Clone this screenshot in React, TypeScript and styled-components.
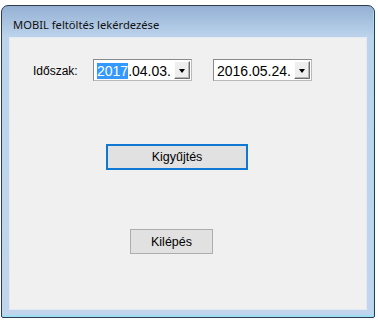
import styled, { createGlobalStyle } from "styled-components";

const GlobalStyle = createGlobalStyle`
  html, body {
    margin: 0;
    padding: 0;
    background: #ffffff;
  }
  * {
    box-sizing: border-box;
  }
`;

const Window = styled.div`
  margin: 5px 0 0 1px;
  width: 374px;
  height: 313px;
  border: 1px solid #2d3c50;
  border-radius: 7px 7px 2px 2px;
  padding: 0 7px 7px 7px;
  display: flex;
  flex-direction: column;
  background: linear-gradient(to bottom, #94b1d4 0px, #bcd3eb 31px, #c1d6ec 100%);
  box-shadow: inset -1px -2px 0 #9fdff3;
`;

const TitleBar = styled.div`
  height: 31px;
  display: flex;
  align-items: center;
  padding: 5px 0 0 4px;
`;

const Title = styled.span`
  font-family: "Noto Sans", "Liberation Sans", sans-serif;
  font-size: 11.2px;
  color: #111;
  white-space: nowrap;
`;

const Client = styled.div`
  flex: 1;
  background: #f0f0f0;
  border: 1px solid #e2eaf4;
  display: flex;
  flex-direction: column;
  align-items: flex-start;
  padding: 21px 0 0 0;
`;

const Row = styled.div`
  display: flex;
  align-items: center;
  padding-left: 23px;
`;

const Label = styled.span`
  width: 60px;
  padding-top: 2px;
  font-family: "Liberation Sans", Arial, sans-serif;
  font-size: 12px;
  color: #000;
`;

const Picker = styled.div<{ $gap?: number }>`
  width: 99px;
  height: 22px;
  margin-left: ${(p) => p.$gap ?? 0}px;
  background: #fff;
  border: 1px solid #8a8a8a;
  border-right-color: #b9b9b9;
  border-bottom-color: #b9b9b9;
  display: flex;
  align-items: center;
  padding: 0 1px 0 3px;
  font-family: "Liberation Sans", Arial, sans-serif;
  font-size: 14px;
  color: #000;
`;

const PickerText = styled.span`
  flex: 1;
  white-space: nowrap;
  line-height: 16px;
  padding-top: 1px;
`;

const Selected = styled.span`
  background: #3399ff;
  color: #fff;
`;

const DropButton = styled.div`
  width: 16px;
  height: 18px;
  background: #eeeeee;
  border: 1px solid #fdfdfd;
  border-right-color: #6f6f6f;
  border-bottom-color: #6f6f6f;
  box-shadow: inset -1px -1px 0 #b5b5b5;
  display: flex;
  align-items: center;
  justify-content: center;
`;

const Arrow = styled.div`
  width: 0;
  height: 0;
  border-left: 3.5px solid transparent;
  border-right: 3.5px solid transparent;
  border-top: 4px solid #000;
  margin-top: 1px;
`;

const Button = styled.button<{ $primary?: boolean; $w: number; $h: number; $left: number; $top: number }>`
  width: ${(p) => p.$w}px;
  height: ${(p) => p.$h}px;
  margin: ${(p) => p.$top}px 0 0 ${(p) => p.$left}px;
  background: #e1e1e1;
  border: ${(p) => (p.$primary ? "2px solid #0e78d4" : "1px solid #adadad")};
  padding: 0;
  font-family: "Liberation Sans", Arial, sans-serif;
  font-size: 12.5px;
  color: #000;
`;

function DatePicker({ year, rest, highlight, gap }: { year: string; rest: string; highlight?: boolean; gap?: number }) {
  return (
    <Picker $gap={gap}>
      <PickerText>
        {highlight ? <Selected>{year}</Selected> : year}
        {rest}
      </PickerText>
      <DropButton>
        <Arrow />
      </DropButton>
    </Picker>
  );
}

export default function App() {
  return (
    <>
      <GlobalStyle />
      <Window>
        <TitleBar>
          <Title>MOBIL feltöltés lekérdezése</Title>
        </TitleBar>
        <Client>
          <Row>
            <Label>Időszak:</Label>
            <DatePicker year="2017" rest=".04.03." highlight />
            <DatePicker year="2016" rest=".05.24." gap={21} />
          </Row>
          <Button $primary $w={142} $h={26} $left={96} $top={63}>
            Kigyűjtés
          </Button>
          <Button $w={83} $h={25} $left={120} $top={59}>
            Kilépés
          </Button>
        </Client>
      </Window>
    </>
  );
}
